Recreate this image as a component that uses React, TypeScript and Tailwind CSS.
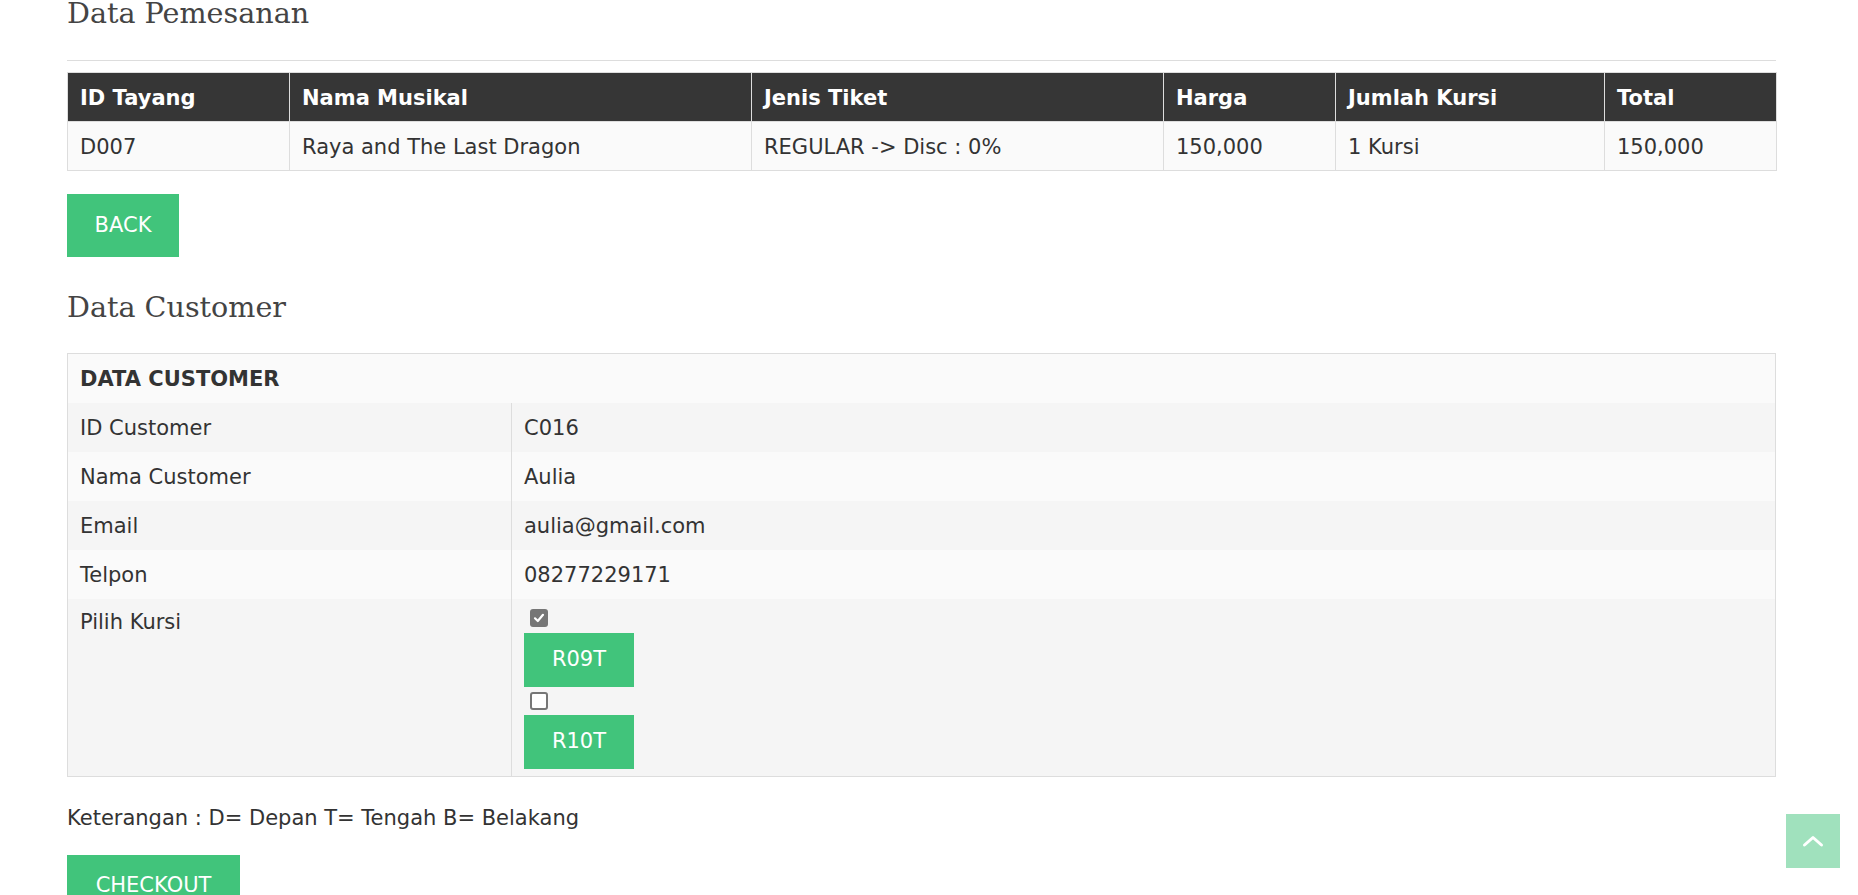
const pesanan = {
  header: ['ID Tayang', 'Nama Musikal', 'Jenis Tiket', 'Harga', 'Jumlah Kursi', 'Total'],
  row: ['D007', 'Raya and The Last Dragon', 'REGULAR -> Disc : 0%', '150,000', '1 Kursi', '150,000'],
}

const customer = [
  ['ID Customer', 'C016'],
  ['Nama Customer', 'Aulia'],
  ['Email', 'aulia@gmail.com'],
  ['Telpon', '08277229171'],
]

function Checkbox({ checked }: { checked?: boolean }) {
  if (checked) {
    return (
      <span className="ml-[6px] flex h-[18px] w-[18px] items-center justify-center rounded-[3px] bg-[#767676]">
        <svg width="12" height="12" viewBox="0 0 12 12" fill="none">
          <path d="M2 6.3 4.8 9 10 2.8" stroke="white" strokeWidth="2.2" strokeLinecap="round" strokeLinejoin="round" />
        </svg>
      </span>
    )
  }
  return <span className="ml-[6px] block h-[18px] w-[18px] rounded-[3px] border-2 border-[#767676] bg-white" />
}

export default function App() {
  return (
    <div className="min-h-screen bg-white font-['DejaVu_Sans',sans-serif] text-[21px] text-[#333]">
      <div className="ml-[67px] w-[1709px]">
        <h2 className="mt-[-4px] font-['DejaVu_Serif',serif] text-[28.6px] leading-[34px] text-[#444]">Data Pemesanan</h2>
        <div className="mt-[30px] h-px bg-[#ddd]" />

        {/* tabel pemesanan */}
        <table className="mt-[11px] w-full table-fixed border-collapse border border-[#ddd]">
          <colgroup>
            <col className="w-[222px]" />
            <col className="w-[462px]" />
            <col className="w-[412px]" />
            <col className="w-[172px]" />
            <col className="w-[269px]" />
            <col className="w-[172px]" />
          </colgroup>
          <thead>
            <tr className="bg-[#363636] text-white">
              {pesanan.header.map((h) => (
                <th key={h} className="h-[49px] border border-[#ddd] px-3 pt-[4px] text-left font-bold">
                  {h}
                </th>
              ))}
            </tr>
          </thead>
          <tbody>
            <tr className="bg-[#fafafa]">
              {pesanan.row.map((c, i) => (
                <td key={i} className="h-[49px] border border-[#ddd] px-3 pt-[4px]">
                  {c}
                </td>
              ))}
            </tr>
          </tbody>
        </table>

        <button className="mt-[23px] block h-[63px] w-[112px] bg-[#41c47b] text-white">BACK</button>

        <h2 className="mt-[33px] font-['DejaVu_Serif',serif] text-[28.6px] leading-[34px] text-[#444]">Data Customer</h2>

        {/* tabel customer */}
        <table className="mt-[29px] w-full table-fixed border-collapse border border-[#ddd]">
          <colgroup>
            <col className="w-[444px]" />
            <col />
          </colgroup>
          <tbody>
            <tr className="bg-[#fafafa]">
              <td colSpan={2} className="h-[49px] px-3 pt-[3px] font-bold">
                DATA CUSTOMER
              </td>
            </tr>
            {customer.map(([k, v], i) => (
              <tr key={k} className={i % 2 === 0 ? 'bg-[#f5f5f5]' : 'bg-[#fafafa]'}>
                <td className="h-[49px] border-r border-[#ddd] px-3 pt-[3px]">{k}</td>
                <td className="h-[49px] px-3 pt-[3px]">{v}</td>
              </tr>
            ))}
            <tr className="bg-[#f5f5f5]">
              <td className="border-r border-[#ddd] px-3 pt-[8px] align-top leading-[30px]">Pilih Kursi</td>
              <td className="px-3 pt-[10px] pb-[7px] align-top">
                <Checkbox checked />
                <div className="mt-[6px] flex h-[54px] w-[110px] items-center justify-center bg-[#41c47b] text-white">R09T</div>
                <div className="mt-[5px]">
                  <Checkbox />
                </div>
                <div className="mt-[5px] flex h-[54px] w-[110px] items-center justify-center bg-[#41c47b] text-white">R10T</div>
              </td>
            </tr>
          </tbody>
        </table>

        <p className="mt-[26px] leading-[30px]">Keterangan : D= Depan T= Tengah B= Belakang</p>

        <button className="mt-[22px] block h-[63px] w-[173px] bg-[#41c47b] text-white">CHECKOUT</button>
      </div>

      <div className="fixed right-[18px] bottom-[27px] flex h-[54px] w-[54px] items-center justify-center bg-[#a0e1bd]">
        <svg width="22" height="14" viewBox="0 0 22 14" fill="none">
          <path d="M2.5 11 11 3.5 19.5 11" stroke="white" strokeWidth="3" strokeLinecap="round" strokeLinejoin="round" />
        </svg>
      </div>
    </div>
  )
}
